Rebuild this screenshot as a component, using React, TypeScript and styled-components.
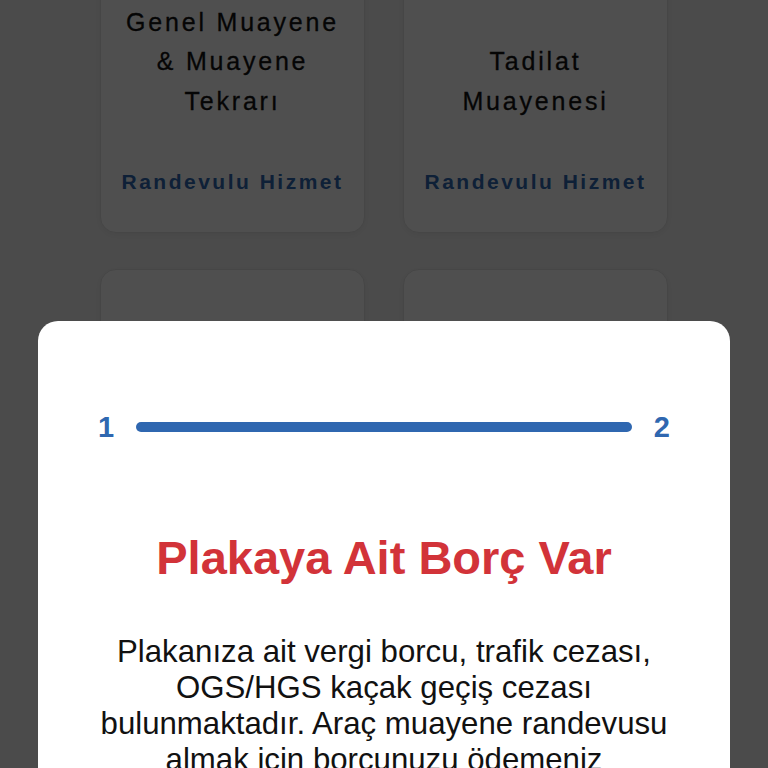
import React from 'react'
import styled, { createGlobalStyle } from 'styled-components'

const services = [
    { title: 'Genel Muayene & Muayene Tekrarı', tag: 'Randevulu Hizmet' },
    { title: 'Tadilat Muayenesi', tag: 'Randevulu Hizmet' },
    { title: 'Egzoz Emisyon Ölçümü', tag: 'Randevulu Hizmet' },
    { title: 'Ek Hizmetler', tag: 'Randevulu Hizmet' },
]

const App: React.FC = () => {
    return (
        <>
            <GlobalStyle />
            <ServiceGrid>
                {services.map(service => {
                    return (
                        <ServiceCard key={service.title}>
                            <CardTitle>{service.title}</CardTitle>
                            <CardTag>{service.tag}</CardTag>
                        </ServiceCard>
                    )
                })}
            </ServiceGrid>

            <Backdrop>
                <Sheet>
                    <Steps>
                        <StepNumber>1</StepNumber>
                        <StepBar />
                        <StepNumber>2</StepNumber>
                    </Steps>
                    <SheetTitle>Plakaya Ait Borç Var</SheetTitle>
                    <SheetText>
                        Plakanıza ait vergi borcu, trafik cezası, OGS/HGS kaçak geçiş cezası
                        bulunmaktadır. Araç muayene randevusu almak için borcunuzu ödemeniz
                        gerekmektedir.
                    </SheetText>
                </Sheet>
            </Backdrop>
        </>
    )
}

export default App

const GlobalStyle = createGlobalStyle`
    html, body {
        margin: 0;
        padding: 0;
        background: #f2f2f2;
        font-family: "Liberation Sans", Arial, sans-serif;
        overflow: hidden;
    }
`

const ServiceGrid = styled.div`
    display: grid;
    grid-template-columns: 265px 265px;
    column-gap: 38px;
    row-gap: 36px;
    justify-content: center;
    margin-top: -60px;
`

const ServiceCard = styled.div`
    display: flex;
    flex-direction: column;
    align-items: center;
    background: #fff;
    border: 1px solid #e2e2e2;
    border-radius: 16px;
    box-shadow: 0 2px 8px rgba(0, 0, 0, 0.06);
    padding: 21px 10px 35px;
    height: 293px;
    box-sizing: border-box;
`

const CardTitle = styled.div`
    height: 161px;
    display: flex;
    align-items: flex-end;
    justify-content: center;
    text-align: center;
    font-size: 25px;
    line-height: 39.5px;
    letter-spacing: 2.8px;
    color: #111;
    padding: 0 6px;
    -webkit-text-stroke: 0.3px #111;
`

const CardTag = styled.div`
    margin-top: 46px;
    font-size: 21px;
    line-height: 30px;
    font-weight: 700;
    letter-spacing: 2.5px;
    color: #2f67b0;
`

const Backdrop = styled.div`
    position: fixed;
    inset: 0;
    background: rgba(0, 0, 0, 0.69);
    display: flex;
    flex-direction: column;
    align-items: center;
    padding-top: 321px;
`

const Sheet = styled.div`
    width: 692px;
    background: #fff;
    border-radius: 20px;
    padding: 88px 60px 40px;
    box-sizing: border-box;
    display: flex;
    flex-direction: column;
    align-items: center;
`

const Steps = styled.div`
    align-self: stretch;
    display: flex;
    align-items: center;
    gap: 22px;
    height: 36px;
`

const StepNumber = styled.span`
    font-size: 29px;
    font-weight: 700;
    color: #2f67b0;
    line-height: 36px;
`

const StepBar = styled.div`
    flex: 1;
    height: 10px;
    border-radius: 5px;
    background: #2f67b0;
`

const SheetTitle = styled.h2`
    margin: 88px 0 0;
    font-size: 47px;
    line-height: 50px;
    font-weight: 700;
    color: #d23339;
    text-align: center;
`

const SheetText = styled.p`
    margin: 51px 0 0;
    font-size: 31.2px;
    line-height: 36px;
    color: #111;
    text-align: center;
`
